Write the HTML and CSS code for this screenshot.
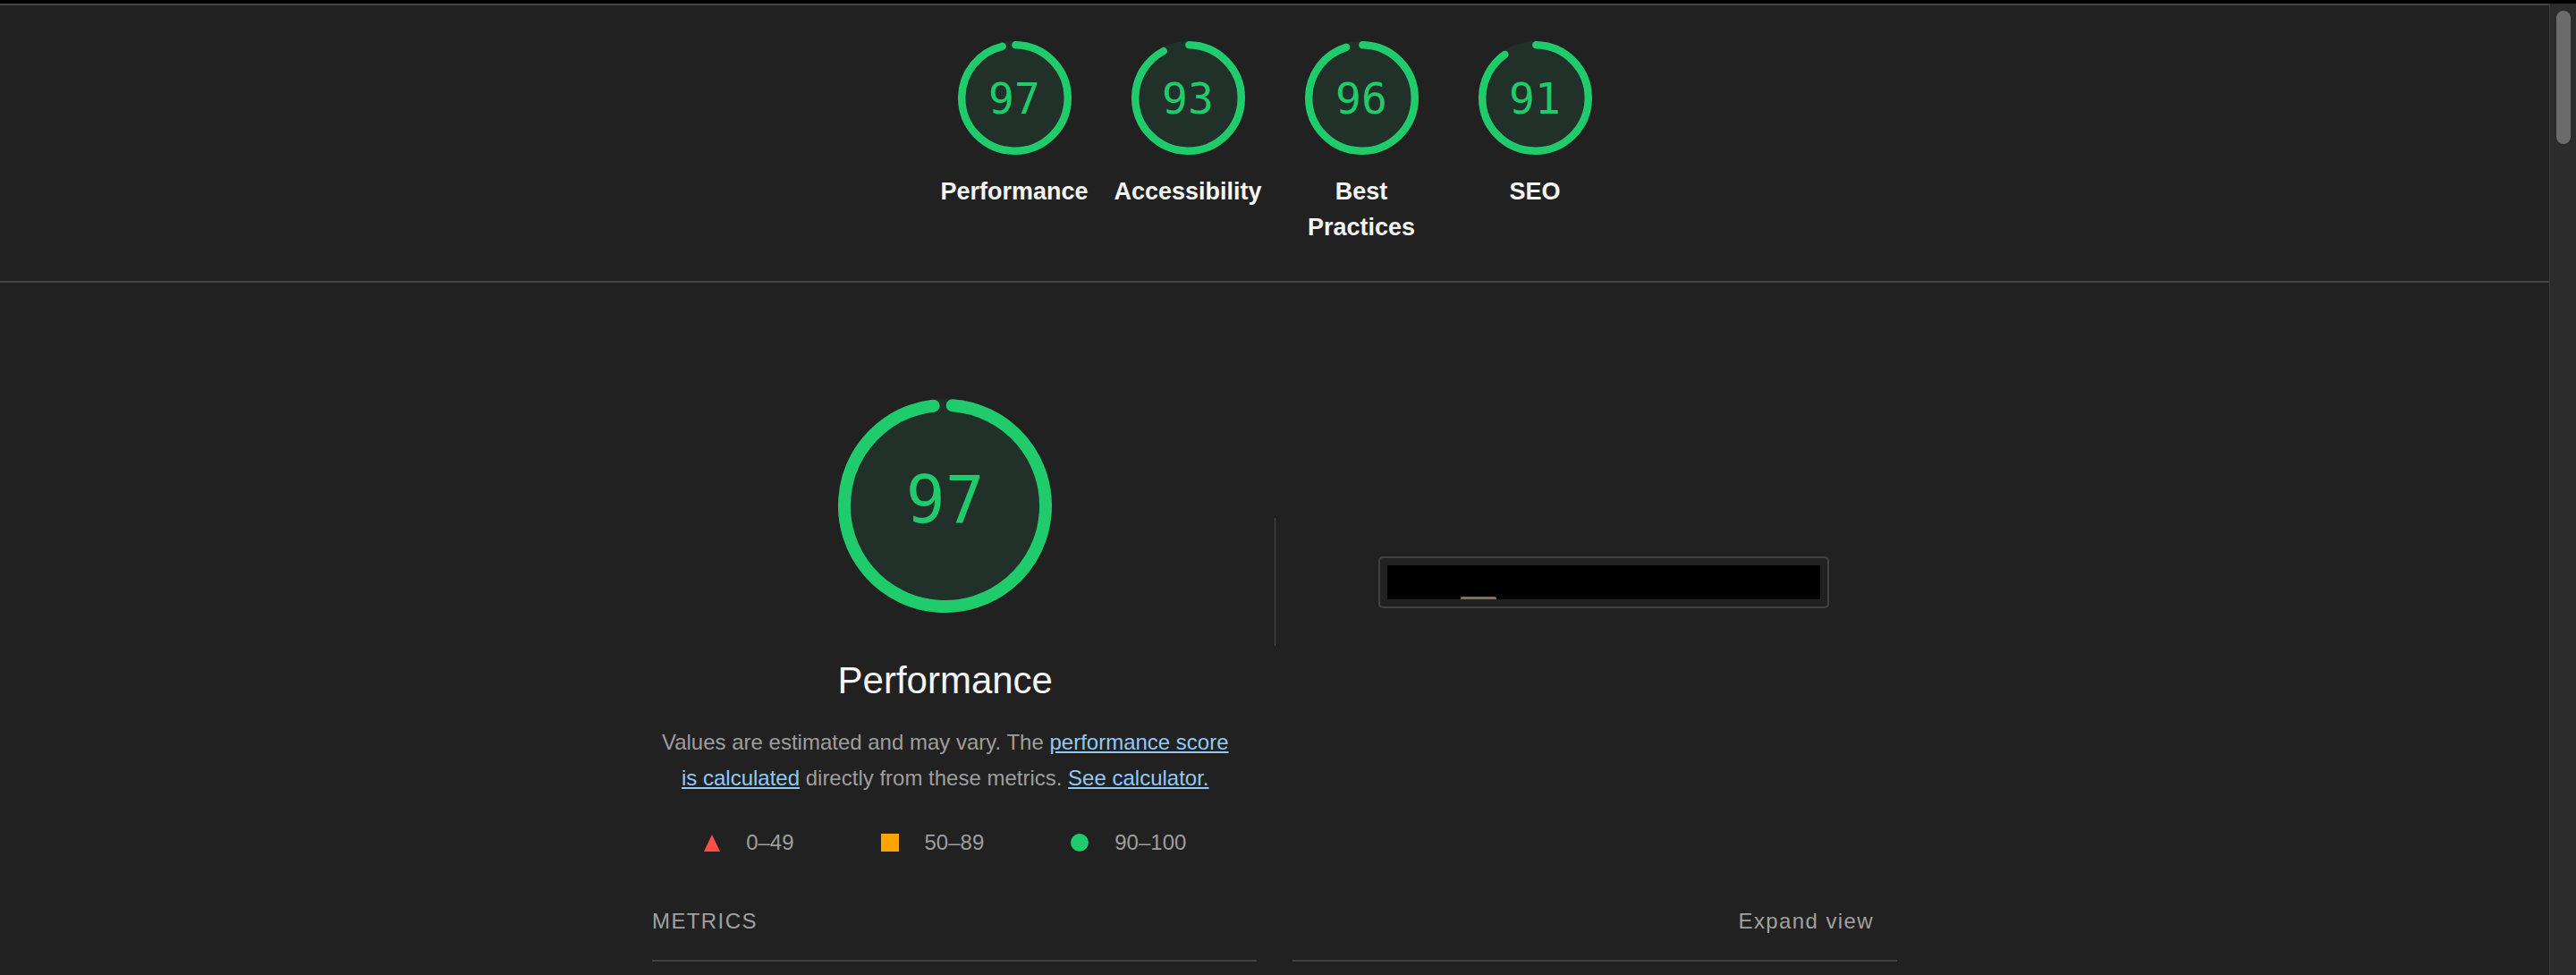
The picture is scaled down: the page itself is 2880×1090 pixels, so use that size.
FILE: index.html
```html
<!DOCTYPE html>
<html lang="en">
<head>
<meta charset="utf-8">
<title>Lighthouse Report</title>
<link rel="stylesheet" href="styles.css">
</head>
<body>
<div class="topbar"></div>
<div class="window">
  <main class="report">
    <header class="scores">
      <a class="gauge-wrap" href="#performance">
        <div class="gauge gauge--sm">
          <svg viewBox="0 0 120 120">
            <circle class="gauge-base" cx="60" cy="60" r="60"/>
            <circle class="gauge-arc" cx="60" cy="60" r="56" stroke-width="8" stroke-dasharray="337.30 351.86" transform="rotate(-89.18 60 60)"/>
          </svg>
          <div class="gauge-pct">97</div>
        </div>
        <div class="gauge-label">Performance</div>
      </a>
      <a class="gauge-wrap" href="#accessibility">
        <div class="gauge gauge--sm">
          <svg viewBox="0 0 120 120">
            <circle class="gauge-base" cx="60" cy="60" r="60"/>
            <circle class="gauge-arc" cx="60" cy="60" r="56" stroke-width="8" stroke-dasharray="323.23 351.86" transform="rotate(-89.18 60 60)"/>
          </svg>
          <div class="gauge-pct">93</div>
        </div>
        <div class="gauge-label">Accessibility</div>
      </a>
      <a class="gauge-wrap" href="#best-practices">
        <div class="gauge gauge--sm">
          <svg viewBox="0 0 120 120">
            <circle class="gauge-base" cx="60" cy="60" r="60"/>
            <circle class="gauge-arc" cx="60" cy="60" r="56" stroke-width="8" stroke-dasharray="333.78 351.86" transform="rotate(-89.18 60 60)"/>
          </svg>
          <div class="gauge-pct">96</div>
        </div>
        <div class="gauge-label">Best Practices</div>
      </a>
      <a class="gauge-wrap" href="#seo">
        <div class="gauge gauge--sm">
          <svg viewBox="0 0 120 120">
            <circle class="gauge-base" cx="60" cy="60" r="60"/>
            <circle class="gauge-arc" cx="60" cy="60" r="56" stroke-width="8" stroke-dasharray="316.19 351.86" transform="rotate(-89.18 60 60)"/>
          </svg>
          <div class="gauge-pct">91</div>
        </div>
        <div class="gauge-label">SEO</div>
      </a>
    </header>

    <section class="category" id="performance">
      <div class="cat-header">
        <div class="cat-score">
          <div class="gauge gauge--lg">
            <svg viewBox="0 0 120 120">
              <circle class="gauge-base" cx="60" cy="60" r="60"/>
              <circle class="gauge-arc" cx="60" cy="60" r="56.5" stroke-width="7" stroke-dasharray="344.1 355" transform="rotate(-85.84 60 60)"/>
            </svg>
            <div class="gauge-pct">97</div>
          </div>
          <div class="cat-title">Performance</div>
          <div class="cat-desc">Values are estimated and may vary. The <a href="#">performance score is calculated</a> directly from these metrics. <a href="#">See calculator.</a></div>
          <div class="scale">
            <div class="scale-item">
              <svg class="scale-icon" width="18" height="19" viewBox="0 0 18 19"><polygon points="9,0 18,19 0,19" fill="#ff4e42"/></svg>
              <span>0–49</span>
            </div>
            <div class="scale-item">
              <span class="scale-square"></span>
              <span>50–89</span>
            </div>
            <div class="scale-item">
              <span class="scale-circle"></span>
              <span>90–100</span>
            </div>
          </div>
        </div>
        <div class="separator"></div>
        <div class="final-shot">
          <div class="shot-frame">
            <div class="shot-img"><span class="shot-mark"></span></div>
          </div>
        </div>
      </div>

      <div class="metrics-head">
        <span class="metrics-title">Metrics</span>
        <span class="metrics-toggle">Expand view</span>
      </div>
      <div class="metrics-grid">
        <div class="metric-col"></div>
        <div class="metric-col"></div>
      </div>
    </section>
  </main>
  <div class="scrollbar"><div class="thumb"></div></div>
</div>
</body>
</html>
```

FILE: styles.css
```css
* {
  box-sizing: border-box;
}

html,
body {
  margin: 0;
  padding: 0;
  height: 100%;
  overflow: hidden;
  background: #212121;
}

body {
  font-family: "Liberation Sans", Arial, Helvetica, sans-serif;
  color: #f5f5f5;
  display: flex;
  flex-direction: column;
}

.topbar {
  height: 4px;
  flex: none;
  background: #000;
}

.window {
  flex: 1;
  display: flex;
  min-height: 0;
}

.report {
  flex: 1;
  min-width: 0;
  border-top: 2px solid #444;
}

.scrollbar {
  width: 30px;
  flex: none;
  background: #2c2c2c;
  border-left: 1px solid #3d3d3d;
  padding: 8px 6px 0 7px;
}

.thumb {
  height: 149px;
  border-radius: 8px;
  background: #6b6b6b;
}

/* Top score gauges */
.scores {
  display: flex;
  justify-content: center;
  gap: 18px;
  padding: 40px 0;
  border-bottom: 2px solid #444;
}

.gauge-wrap {
  width: 176px;
  display: flex;
  flex-direction: column;
  align-items: center;
  text-decoration: none;
}

.gauge {
  display: grid;
  place-items: center;
}

.gauge > * {
  grid-area: 1 / 1;
}

.gauge svg {
  display: block;
}

.gauge-base {
  fill: #22302a;
}

.gauge-arc {
  fill: none;
  stroke: #1fcb6b;
  stroke-linecap: round;
}

.gauge-pct {
  font-family: "DejaVu Sans Mono", "Liberation Mono", monospace;
  color: #1fcb6b;
  line-height: 1;
}

.gauge--sm,
.gauge--sm svg {
  width: 127px;
  height: 127px;
}

.gauge--sm .gauge-pct {
  font-size: 48px;
}

.gauge-label {
  margin-top: 21px;
  font-size: 27px;
  line-height: 40px;
  font-weight: 700;
  text-align: center;
  color: #f5f5f5;
}

/* Performance category */
.category {
  width: 1392px;
  margin: 0 auto;
  padding-top: 130px;
}

.cat-header {
  display: grid;
  grid-template-columns: 1fr 1px 1fr;
  column-gap: 40px;
  align-items: start;
}

.cat-score {
  display: flex;
  flex-direction: column;
  align-items: center;
}

.gauge--lg,
.gauge--lg svg {
  width: 239px;
  height: 239px;
}

.gauge--lg .gauge-pct {
  font-size: 73px;
  margin-bottom: 14px;
}

.cat-title {
  margin-top: 52px;
  font-size: 42px;
  line-height: 48px;
  color: #f5f5f5;
}

.cat-desc {
  margin-top: 25px;
  font-size: 24px;
  line-height: 40px;
  color: #9e9e9e;
  text-align: center;
}

.cat-desc a {
  color: #90caf9;
}

.scale {
  margin-top: 32px;
  display: flex;
  gap: 97px;
  font-size: 24px;
  line-height: 40px;
  color: #9e9e9e;
}

.scale-item {
  display: flex;
  align-items: center;
  gap: 29px;
}

.scale-icon {
  display: block;
}

.scale-square {
  width: 20px;
  height: 20px;
  background: #ffa400;
}

.scale-circle {
  width: 20px;
  height: 20px;
  border-radius: 50%;
  background: #1fcb6b;
}

.separator {
  margin-top: 133px;
  height: 143px;
  background: #4a4a4a;
}

.final-shot {
  justify-self: center;
  margin-top: 176px;
}

.shot-frame {
  border: 2px solid #424242;
  border-radius: 5px;
  padding: 8px;
}

.shot-img {
  width: 484px;
  height: 38px;
  background: #000;
  display: flex;
  align-items: flex-end;
  padding-left: 82px;
}

.shot-mark {
  width: 40px;
  height: 3px;
  background: #8a6e50;
  border-radius: 2px 2px 0 0;
}

.metrics-head {
  margin-top: 48px;
  display: flex;
  justify-content: space-between;
  font-size: 24px;
  line-height: 40px;
  letter-spacing: 1.4px;
  color: #a0a0a0;
  padding-right: 26px;
}

.metrics-title {
  text-transform: uppercase;
}

.metrics-grid {
  margin-top: 23px;
  display: grid;
  grid-template-columns: 1fr 1fr;
  column-gap: 40px;
}

.metric-col {
  border-top: 2px solid #424242;
  height: 120px;
}
```
